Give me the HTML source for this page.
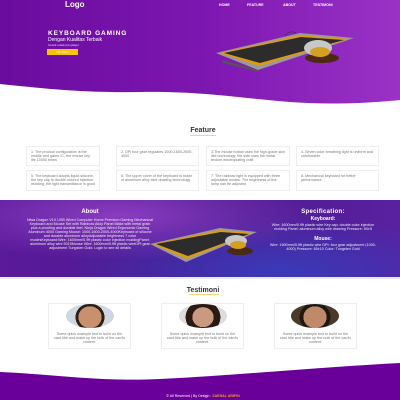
<!DOCTYPE html>
<html><head><meta charset="utf-8"><style>
*{margin:0;padding:0;box-sizing:border-box}
body{width:400px;height:400px;overflow:hidden;background:#fff;font-family:"Liberation Sans",sans-serif;position:relative}
.a{position:absolute}
.hero{left:0;top:0;width:400px;height:110px;background:linear-gradient(90deg,#6a0c9e,#7c16b0 50%,#9a32c6)}
.nav{top:3px;font-size:3.6px;color:#fff;font-weight:bold}
.card{background:#fff;border:1px solid #eee;font-size:3.7px;color:#777;line-height:4px;padding:3px 4px}
.tc{text-align:center}
</style></head><body>
<div class="a hero"></div>
<svg class="a" style="left:0;top:0" width="400" height="400">
<path d="M0 84 C40 88 80 93 140 92 C200 91 240 98 290 102 C330 105 370 103 400 100 L400 112 L0 112Z" fill="#fff"/>
<path d="M0 372 C50 374 100 382 160 379 C240 375 320 367 400 363 L400 400 L0 400Z" fill="#6a0099"/>
</svg>
<div class="a" style="left:65px;top:0px;font-size:8px;font-weight:bold;color:#fff">Logo</div>
<div class="a nav" style="left:219px">HOME</div>
<div class="a nav" style="left:247px">FEATURE</div>
<div class="a nav" style="left:283px">ABOUT</div>
<div class="a nav" style="left:313px">TESTIMONI</div>
<div class="a" style="left:48px;top:30px;font-size:6.5px;font-weight:bold;color:#fff;letter-spacing:0.9px">KEYBOARD GAMING</div>
<div class="a" style="left:48px;top:37px;font-size:5px;color:#fff">Dengan Kualitas Terbaik</div>
<div class="a" style="left:48px;top:43px;font-size:3px;color:#eee">Cocok untuk pro player</div>
<div class="a" style="left:47px;top:49px;width:31px;height:6px;background:#f7c400;font-size:2.8px;color:#fff;text-align:center;line-height:6px">Klik Disini</div>
<svg class="a" style="left:0;top:0" width="400" height="80">
<path d="M285 36 C288 31 292 31 296 33" stroke="#333" fill="none" stroke-width="0.6"/>
<polygon points="216,53 300,33 354,38 258,70" fill="#9a9a9a"/>
<polygon points="220,53 300,35 349,39 259,66" fill="#e09a10"/>
<polygon points="224,53 301,37 344,40 260,63" fill="#2c2c2c"/>
<polygon points="222,60 258,70 259,72 223,63" fill="#555"/>
<ellipse cx="322" cy="58" rx="17" ry="5" fill="#4a2a10"/>
<ellipse cx="318" cy="48" rx="14" ry="8" fill="#c8c8c8"/>
<ellipse cx="320" cy="52" rx="10" ry="5" fill="#d4a020"/>
</svg>
<div class="a tc" style="left:0;width:406px;top:127px;font-size:7px;font-weight:bold;color:#333">Feature</div>
<div class="a" style="left:190px;top:135px;width:26px;height:1px;background:#f5d77a"></div>
<div class="a card" style="left:26px;top:146px;width:74px;height:20px">1. The product configuration is the middle and game IC, the mouse key life 10000 times</div>
<div class="a card" style="left:116px;top:146px;width:83px;height:20px">2. DPI four gear regulates 1000-1600-2000-4000</div>
<div class="a card" style="left:206px;top:146px;width:84px;height:20px">3.The mouse button uses the high-grade skin like technology, the side uses the metal texture electroplating craft</div>
<div class="a card" style="left:296px;top:146px;width:83px;height:20px">4. Seven color breathing light is uniform and comfortable</div>
<div class="a card" style="left:26px;top:170px;width:74px;height:21px">5. The keyboard adopts liquid silicone, the key cap is double colored injection molding, the light transmittance is good</div>
<div class="a card" style="left:116px;top:170px;width:83px;height:21px">6. The upper cover of the keyboard is made of aluminum alloy wire drawing technology</div>
<div class="a card" style="left:206px;top:170px;width:84px;height:21px">7. The rainbow light is equipped with three adjustable modes. The brightness of the lamp can be adjusted</div>
<div class="a card" style="left:296px;top:170px;width:83px;height:21px">8. Mechanical keyboard for better performance</div>
<div class="a" style="left:0;top:200px;width:400px;height:78px;background:radial-gradient(ellipse at 30% 20%,#8a3cc0,transparent 50%),radial-gradient(ellipse at 70% 90%,#3a3ab8,transparent 55%),linear-gradient(90deg,#5a1a9a,#4a1a8e 50%,#5a20a0)"></div>
<div class="a" style="left:0;top:277px;width:400px;height:2px;background:#e8e8f0"></div>
<div class="a tc" style="left:40px;width:100px;top:209px;font-size:6px;font-weight:bold;color:#fff">About</div>
<div class="a tc" style="left:26px;width:128px;top:218px;font-size:3.7px;line-height:4px;color:#eee">Niwa Dragon V1X USB Wired Computer Home Premium Gaming Mechanical Keyboard and Mouse Set with Rainbow Alloy Panel Make with metal grain plus a proofing and durable feel. Ninja Dragon Wired Ergonomic Gaming Aluminum 4000 Gaming Mouse: 1000-1600-2000-4000Keyboard of silicone and durable aluminum alloyAdjustable brightness 7 color modesKeyboard:Wire: 1600mm/5.9ft plastic color injection moldingPanel: aluminum alloy wire 5015Mouse Wire: 1600mm/5.9ft plastic wireDPI gear adjustment Tungsten Gold. Login to see all details</div>
<svg class="a" style="left:0;top:200px" width="400" height="80">
<polygon points="150,44 220,28 257,32 186,62" fill="#9a9a9a"/>
<polygon points="153,44 220,30 253,33 187,59" fill="#e09a10"/>
<polygon points="156,44 221,32 249,34 188,56" fill="#2c2c2c"/>
<ellipse cx="240" cy="51" rx="13" ry="4" fill="#4a2a10"/>
<ellipse cx="236" cy="41" rx="11" ry="6" fill="#c8c8c8"/>
<ellipse cx="238" cy="45" rx="8" ry="4" fill="#d4a020"/>
</svg>
<div class="a tc" style="left:258px;width:130px;top:209px;font-size:6px;font-weight:bold;color:#fff;letter-spacing:0.3px">Specification:</div>
<div class="a tc" style="left:258px;width:130px;top:216px;font-size:5px;font-weight:bold;color:#fff">Keyboard:</div>
<div class="a tc" style="left:266px;width:114px;top:223px;font-size:3.7px;line-height:4px;color:#eee">Wire: 1600mm/5.9ft plastic wire Key cap: double color injection molding Panel: aluminum alloy wire drawing Pressure: 50±5</div>
<div class="a tc" style="left:258px;width:130px;top:236px;font-size:5px;font-weight:bold;color:#fff">Mouse:</div>
<div class="a tc" style="left:266px;width:114px;top:243px;font-size:3.7px;line-height:4px;color:#eee">Wire: 1600mm/5.9ft plastic wire DPI: four gear adjustment (1000-4000) Pressure: 65±10 Color: Tungsten Gold</div>
<div class="a tc" style="left:0;width:406px;top:287px;font-size:7px;font-weight:bold;color:#333">Testimoni</div>
<div class="a" style="left:189px;top:294px;width:30px;height:1px;background:#f5d77a"></div>
<div class="a card tc" style="left:48px;top:303px;width:83px;height:46px;padding-top:28px">Some quick example text to build on the card title and make up the bulk of the card's content.</div>
<div class="a card tc" style="left:161px;top:303px;width:83px;height:46px;padding-top:28px">Some quick example text to build on the card title and make up the bulk of the card's content.</div>
<div class="a card tc" style="left:274px;top:303px;width:83px;height:46px;padding-top:28px">Some quick example text to build on the card title and make up the bulk of the card's content.</div>
<div class="a" style="left:66px;top:304px;width:48px;height:24px;border-radius:50%;background:radial-gradient(ellipse 40% 75% at 50% 55%,#c9906e 0 60%,#2a2018 61% 75%,#cfd8e2 76%)"></div>
<div class="a" style="left:179px;top:304px;width:48px;height:24px;border-radius:50%;background:radial-gradient(ellipse 40% 75% at 50% 55%,#c99a80 0 55%,#2a1a14 56% 90%,#ddd 91%)"></div>
<div class="a" style="left:291px;top:304px;width:48px;height:24px;border-radius:50%;background:radial-gradient(ellipse 40% 75% at 50% 55%,#c08a68 0 60%,#1e1814 61% 80%,#4a3a28 81%)"></div>
<div class="a tc" style="left:0;width:406px;top:394px;font-size:3.6px;color:#fff">© All Reserved | By Design : <b style="color:#f0a020">ZAENAL ARIFIN</b></div>
</body></html>
